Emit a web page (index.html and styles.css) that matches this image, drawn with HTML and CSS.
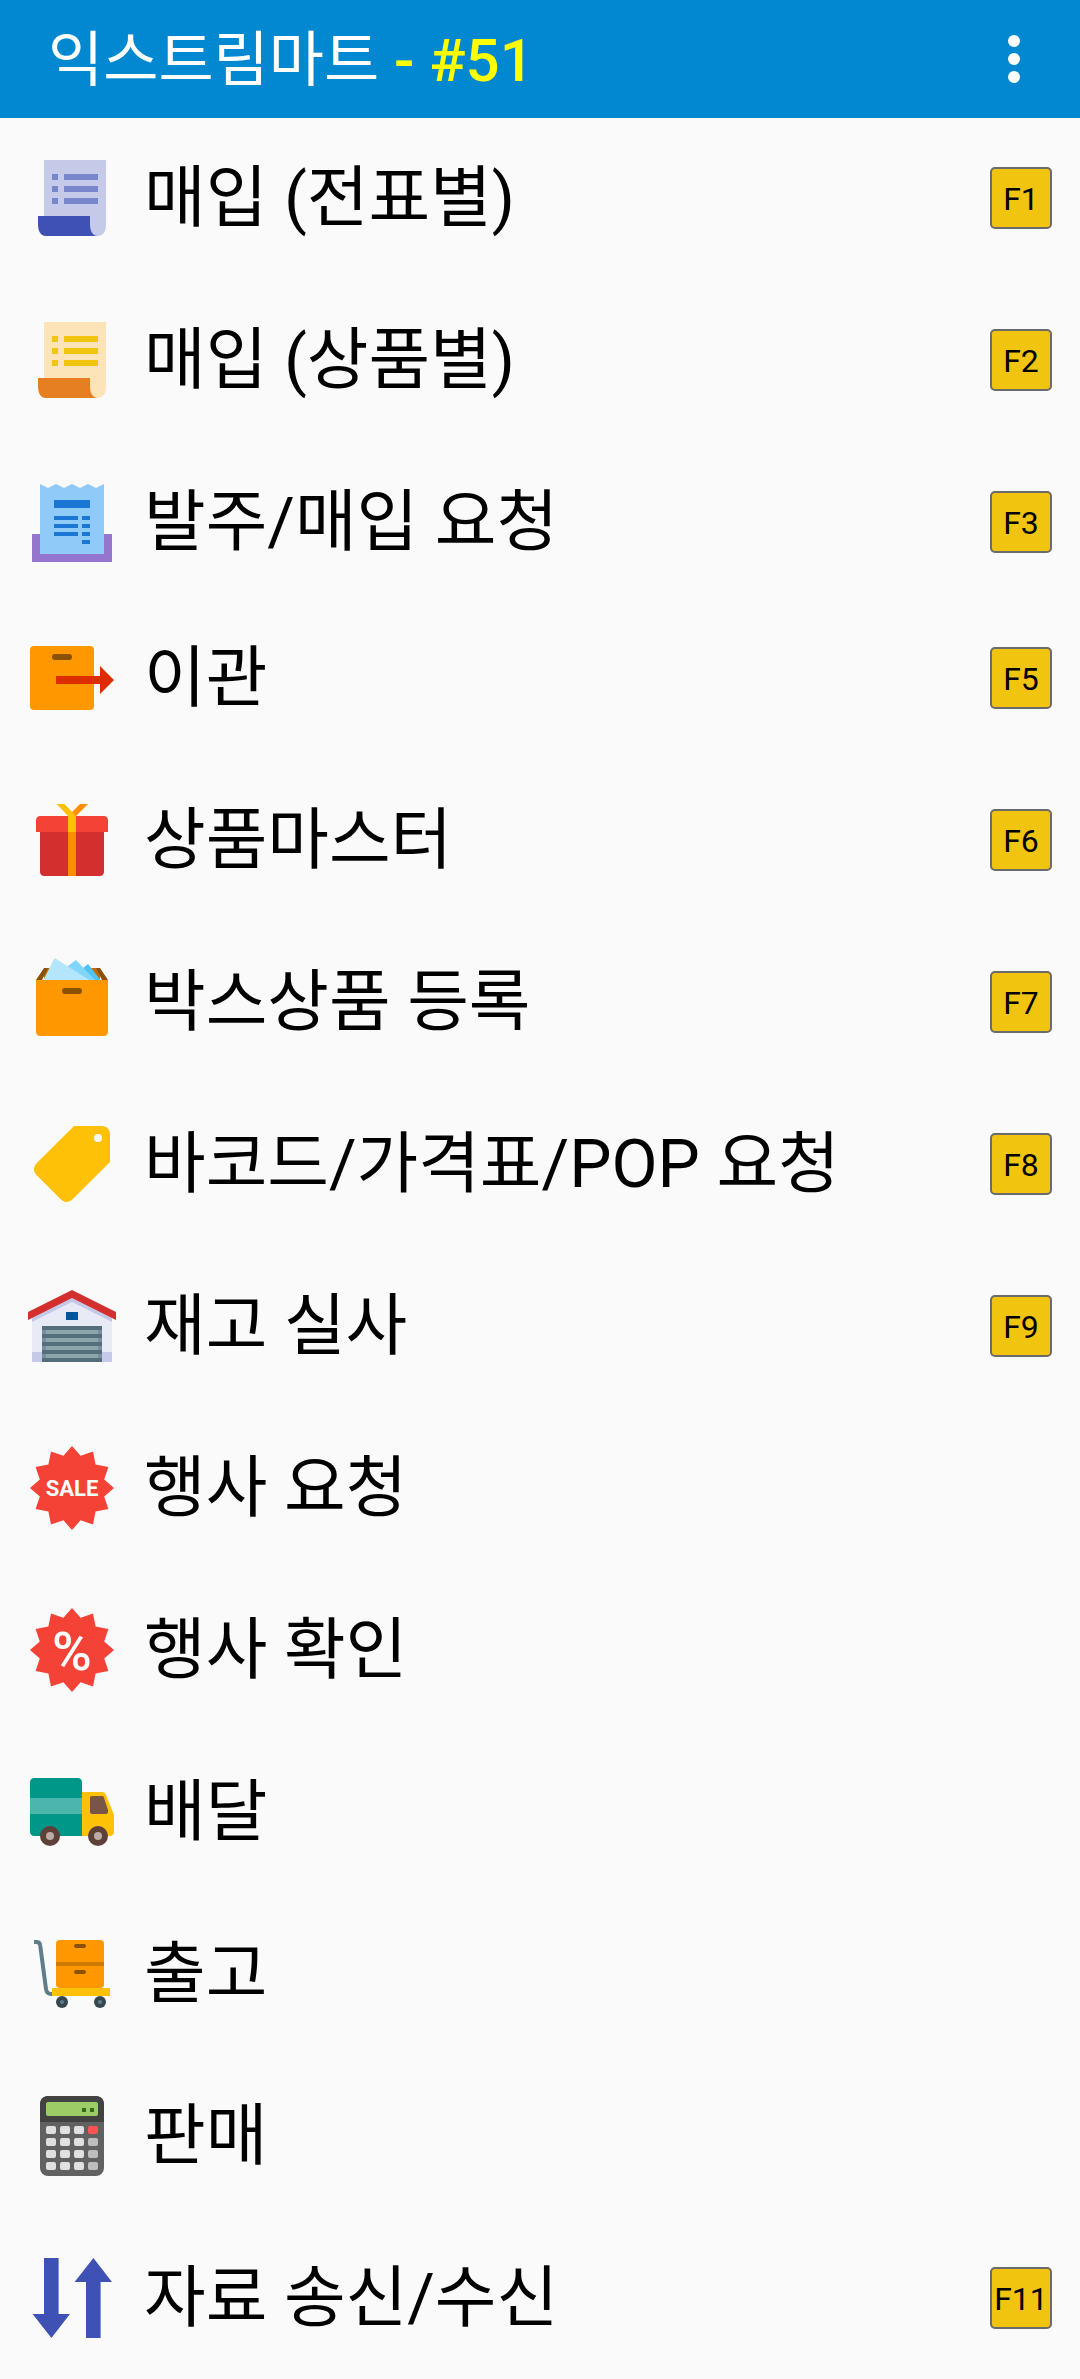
FILE: index.html
```html
<!DOCTYPE html>
<html lang="ko">
<head>
    <meta charset="UTF-8">
    <meta name="viewport" content="width=device-width, initial-scale=1.0">
    <title>익스트림마트</title>
    <link rel="stylesheet" href="styles.css">
</head>
<body>
    <header class="app-bar">
        <h1>익스트림마트 <span class="store-no">- #51</span></h1>
        <button class="more-button" aria-label="더보기">
            <svg viewBox="0 0 12 48"><circle cx="6" cy="6" r="6"/><circle cx="6" cy="24" r="6"/><circle cx="6" cy="42" r="6"/></svg>
        </button>
    </header>

    <main class="menu">
        <div class="menu-group">
            <button class="menu-item">
                <svg class="icon" viewBox="0 0 48 48">
                    <path fill="#c5cae9" d="M10 5h31v32c0 4-1.500 6-4.500 6H30l-3-8H10z"/>
                    <path fill="#3f51b5" d="M7 33h26v4c0 3 1 6 4 6H11c-3 0-4-3-4-6z"/>
                    <path fill="#7986cb" d="M14 12h3v3h-3zM20 12h17v3H20zM14 18h3v3h-3zM20 18h17v3H20zM14 24h3v3h-3zM20 24h17v3H20z"/>
                </svg>
                <span class="label">매입 (전표별)</span>
                <kbd>F1</kbd>
            </button>
            <button class="menu-item">
                <svg class="icon" viewBox="0 0 48 48">
                    <path fill="#fde3b8" d="M10 5h31v32c0 4-1.500 6-4.500 6H30l-3-8H10z"/>
                    <path fill="#e67e22" d="M7 33h26v4c0 3 1 6 4 6H11c-3 0-4-3-4-6z"/>
                    <path fill="#f1c40f" d="M14 12h3v3h-3zM20 12h17v3H20zM14 18h3v3h-3zM20 18h17v3H20zM14 24h3v3h-3zM20 24h17v3H20z"/>
                </svg>
                <span class="label">매입 (상품별)</span>
                <kbd>F2</kbd>
            </button>
            <button class="menu-item">
                <svg class="icon" viewBox="0 0 48 48">
                    <path fill="#9575cd" d="M4 30h40v14H4z"/>
                    <path fill="#90caf9" d="M8 5l4 2 4-2 4 2 4-2 4 2 4-2 4 2 4-2v35H8z"/>
                    <path fill="#1976d2" d="M15 13h18v4H15zM15 21h12v2H15zM29 21h4v2h-4zM15 25h12v2H15zM29 25h4v2h-4zM15 29h12v2H15zM29 29h4v2h-4zM29 33h4v2h-4z"/>
                </svg>
                <span class="label">발주/매입 요청</span>
                <kbd>F3</kbd>
            </button>
        </div>

        <div class="menu-group">
            <button class="menu-item">
                <svg class="icon" viewBox="0 0 48 48">
                    <rect fill="#ff9800" x="3" y="8" width="32" height="32" rx="2"/>
                    <rect fill="#8a5100" x="14" y="12" width="10" height="3" rx="1.500"/>
                    <path fill="#dd2c00" d="M16 23h22v-5l7 7-7 7v-5H16z"/>
                </svg>
                <span class="label">이관</span>
                <kbd>F5</kbd>
            </button>
            <button class="menu-item">
                <svg class="icon" viewBox="0 0 48 48">
                    <path fill="#d32f2f" d="M8 19h32v21c0 1.100-.9 2-2 2H10c-1.100 0-2-.9-2-2z"/>
                    <path fill="#f44336" d="M6 20v-6c0-1.100.9-2 2-2h32c1.100 0 2 .9 2 2v6z"/>
                    <path fill="#ff8f00" d="M22 20h4v22h-4zM24 10l4-4h4l-7 7z"/>
                    <path fill="#ffc107" d="M16.300 6h4L26 12v8h-4v-8z"/>
                </svg>
                <span class="label">상품마스터</span>
                <kbd>F6</kbd>
            </button>
            <button class="menu-item">
                <svg class="icon" viewBox="0 0 48 48">
                    <path fill="#bf6c00" d="M10 7h28v6H10z"/>
                    <path fill="#8a5100" d="M6 13l4-6h2l-3 6zM42 13l-4-6-2 0 3 6z"/>
                    <path fill="#4fc3f7" d="M32 5l-5 4v4h11.300z"/>
                    <path fill="#81d4fa" d="M26 3l-6 4.500V13h15.500z"/>
                    <path fill="#b3e5fc" d="M15.300 2L9.700 13h23z"/>
                    <path fill="#ff9800" d="M6 13h36v26c0 1.100-.9 2-2 2H8c-1.100 0-2-.9-2-2z"/>
                    <rect fill="#8a5100" x="19" y="17" width="10" height="3" rx="1.500"/>
                </svg>
                <span class="label">박스상품 등록</span>
                <kbd>F7</kbd>
            </button>
            <button class="menu-item">
                <svg class="icon" viewBox="0 0 48 48">
                    <path fill="#ffc107" d="M25 5h14c2.200 0 4 1.800 4 4v14L24.200 41.800c-1.600 1.600-4.100 1.600-5.700 0L6.200 29.500c-1.600-1.600-1.600-4.100 0-5.700z"/>
                    <circle fill="#fafafa" cx="37" cy="11" r="2"/>
                </svg>
                <span class="label">바코드/가격표/POP 요청</span>
                <kbd>F8</kbd>
            </button>
            <button class="menu-item">
                <svg class="icon" viewBox="0 0 48 48">
                    <path fill="#e8eaf6" d="M4 18L24 8l20 10v24H4z"/>
                    <path fill="#c5cae9" d="M4 37h5v5H4zM39 37h5v5h-5zM24 9L4 19v3l20-10 20 10v-3z"/>
                    <path fill="#d32f2f" d="M24 6L2 17v4l22-11 22 11v-4z"/>
                    <path fill="#01579b" d="M21 17h6v4h-6z"/>
                    <path fill="#546e7a" d="M9 24h30v18H9z"/>
                    <path fill="#78909c" d="M9 26h30v2H9zM9 30h30v2H9zM9 34h30v2H9zM9 38h30v2H9z"/>
                    <path fill="#90a4ae" d="M11 26h26v2H11zM11 30h26v2H11zM11 34h26v2H11zM11 38h26v2H11z"/>
                </svg>
                <span class="label">재고 실사</span>
                <kbd>F9</kbd>
            </button>
            <button class="menu-item">
                <svg class="icon" viewBox="0 0 48 48">
                    <polygon fill="#f44336" points="24,3 28.3,7.900 34.500,5.800 35.800,12.200 42.200,13.500 40.100,19.700 45,24 40.100,28.300 42.200,34.500 35.800,35.800 34.500,42.200 28.300,40.100 24,45 19.700,40.100 13.500,42.200 12.200,35.800 5.800,34.500 7.900,28.300 3,24 7.900,19.700 5.800,13.500 12.200,12.200 13.500,5.800 19.700,7.900"/>
                    <text class="sale" x="24" y="28">SALE</text>
                </svg>
                <span class="label">행사 요청</span>
            </button>
            <button class="menu-item">
                <svg class="icon" viewBox="0 0 48 48">
                    <polygon fill="#f44336" points="24,3 28.3,7.900 34.500,5.800 35.800,12.200 42.200,13.500 40.100,19.700 45,24 40.100,28.300 42.200,34.500 35.800,35.800 34.500,42.200 28.300,40.100 24,45 19.700,40.100 13.500,42.200 12.200,35.800 5.800,34.500 7.900,28.300 3,24 7.900,19.700 5.800,13.500 12.200,12.200 13.500,5.800 19.700,7.900"/>
                    <text class="percent" x="24" y="34">%</text>
                </svg>
                <span class="label">행사 확인</span>
            </button>
            <button class="menu-item">
                <svg class="icon" viewBox="0 0 48 48">
                    <path fill="#009688" d="M29 36H5c-1.100 0-2-.9-2-2V9c0-1.100.9-2 2-2h22c1.100 0 2 .9 2 2z"/>
                    <path fill="#4db6ac" d="M3 17h26v8H3z"/>
                    <path fill="#ffc107" d="M29 14h10c.9 0 1.600.5 1.900 1.300L44.800 25c.1.300.2.600.2.900V34c0 1.100-.9 2-2 2H29z"/>
                    <path fill="#795548" d="M34 16h5c.4 0 .8.300.9.600L42 23v1c0 .6-.4 1-1 1h-7c-.6 0-1-.4-1-1v-7c0-.6.4-1 1-1z"/>
                    <g fill="#5d4037"><circle cx="13" cy="36" r="5"/><circle cx="37" cy="36" r="5"/></g>
                    <g fill="#bcaaa4"><circle cx="13" cy="36" r="2"/><circle cx="37" cy="36" r="2"/></g>
                </svg>
                <span class="label">배달</span>
            </button>
            <button class="menu-item">
                <svg class="icon" viewBox="0 0 48 48">
                    <path fill="none" stroke="#607d8b" stroke-width="2" d="M5 8h1.200c1 0 1.800.7 1.900 1.700L11 31.500c.2 1.500 1 2.500 2.500 2.500H15"/>
                    <rect fill="#ff9800" x="16" y="7" width="24" height="24" rx="2"/>
                    <path fill="#cc7a00" d="M16 18h24v2H16z"/>
                    <g fill="#8a5100"><rect x="25" y="9" width="6" height="2" rx="1"/><rect x="25" y="22" width="6" height="2" rx="1"/></g>
                    <path fill="#ffc107" d="M14 31h29v4H14z"/>
                    <g fill="#37474f"><circle cx="19" cy="38" r="3"/><circle cx="38" cy="38" r="3"/></g>
                    <g fill="#607d8b"><circle cx="19" cy="38" r="1"/><circle cx="38" cy="38" r="1"/></g>
                </svg>
                <span class="label">출고</span>
            </button>
            <button class="menu-item">
                <svg class="icon" viewBox="0 0 48 48">
                    <rect fill="#616161" x="8" y="4" width="32" height="40" rx="4"/>
                    <path fill="#424242" d="M8 17V8c0-2.200 1.800-4 4-4h24c2.200 0 4 1.800 4 4v9z"/>
                    <rect fill="#9ccc65" x="11" y="7" width="26" height="7" rx="1"/>
                    <path fill="#33691e" d="M29 10h2v2h-2zM33 10h2v2h-2z"/>
                    <g fill="#e0e0e0">
                        <rect x="11" y="19" width="5" height="4" rx="1"/><rect x="18" y="19" width="5" height="4" rx="1"/><rect x="25" y="19" width="5" height="4" rx="1"/>
                        <rect x="11" y="25" width="5" height="4" rx="1"/><rect x="18" y="25" width="5" height="4" rx="1"/><rect x="25" y="25" width="5" height="4" rx="1"/>
                        <rect x="11" y="31" width="5" height="4" rx="1"/><rect x="18" y="31" width="5" height="4" rx="1"/><rect x="25" y="31" width="5" height="4" rx="1"/>
                        <rect x="11" y="37" width="5" height="4" rx="1"/><rect x="18" y="37" width="5" height="4" rx="1"/><rect x="25" y="37" width="5" height="4" rx="1"/>
                    </g>
                    <rect fill="#ff5252" x="32" y="19" width="5" height="4" rx="1"/>
                    <g fill="#bdbdbd"><rect x="32" y="25" width="5" height="4" rx="1"/><rect x="32" y="31" width="5" height="4" rx="1"/><rect x="32" y="37" width="5" height="4" rx="1"/></g>
                </svg>
                <span class="label">판매</span>
            </button>
            <button class="menu-item">
                <svg class="icon" viewBox="0 0 48 48">
                    <path fill="#3f51b5" d="M10 4h7.300v28H23l-9.300 12L4.300 32H10zM31 44V16h-5.700l9.400-12L44 16h-5.700v28z"/>
                </svg>
                <span class="label">자료 송신/수신</span>
                <kbd>F11</kbd>
            </button>
        </div>
    </main>
</body>
</html>
```
FILE: styles.css
```css
* {
    box-sizing: border-box;
}

body {
    margin: 0;
    background-color: #fafafa;
    color: #000;
    font-family: Roboto, "Noto Sans CJK KR", sans-serif;
}

button {
    padding: 0;
    border: none;
    background: none;
    color: inherit;
    font: inherit;
    cursor: pointer;
}

.app-bar {
    display: flex;
    align-items: center;
    justify-content: space-between;
    height: 118px;
    padding: 0 48px;
    background-color: #0288d1;
    color: white;
}

.app-bar h1 {
    margin: 0;
    padding-top: 4px;
    font-size: 60px;
    font-weight: 400;
    line-height: 80px;
}

.store-no {
    color: #ffff00;
    font-weight: 500;
}

.more-button {
    width: 36px;
    height: 48px;
}

.more-button svg {
    display: block;
    width: 12px;
    height: 48px;
    margin: 0 auto;
    fill: white;
}

.menu {
    display: flex;
    flex-direction: column;
    gap: 60px;
    padding: 32px 28px 32px 24px;
}

/* 96px rows */
.menu-group {
    display: flex;
    flex-direction: column;
    gap: 66px;
}

.menu-item {
    display: flex;
    align-items: center;
    width: 100%;
    height: 96px;
    text-align: left;
}

.icon {
    flex: none;
    width: 96px;
    height: 96px;
    margin-right: 24px;
}

.label {
    flex: 1;
    font-size: 67px;
    font-weight: 400;
    line-height: 96px;
    white-space: nowrap;
}

kbd {
    flex: none;
    width: 62px;
    height: 62px;
    border: 2px solid #6b6b6b;
    border-radius: 5px;
    background-color: #f1c40f;
    font-family: Roboto, sans-serif;
    font-size: 32px;
    line-height: 60px;
    text-align: center;
}

.sale,
.percent {
    fill: white;
    font-family: Roboto, sans-serif;
    text-anchor: middle;
}

.sale {
    font-size: 11px;
    font-weight: 700;
}

.percent {
    font-size: 27px;
    font-weight: 500;
}
```
